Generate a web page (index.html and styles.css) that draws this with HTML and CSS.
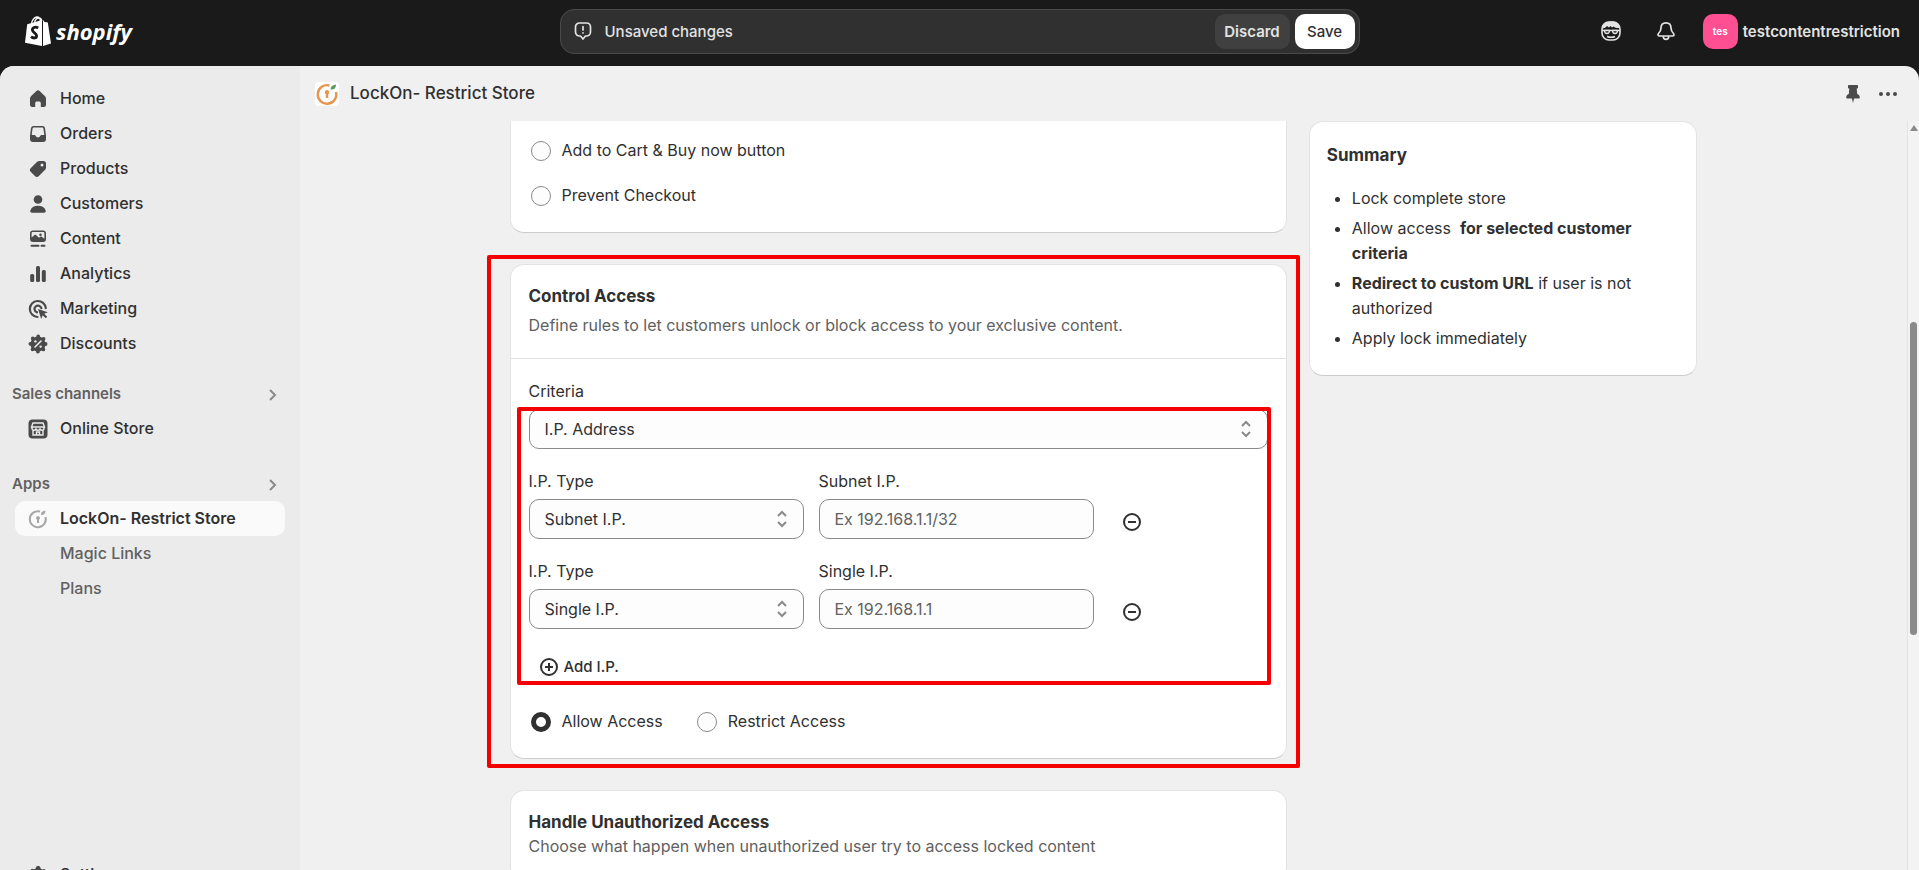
FILE: index.html
```html
<!DOCTYPE html>
<html lang="en">
<head>
    <meta charset="UTF-8">
    <meta name="viewport" content="width=device-width, initial-scale=1.0">
    <title>LockOn- Restrict Store</title>
    <link rel="stylesheet" href="styles.css">
</head>
<body>
    <header class="topbar">
        <a href="#" class="logo" aria-label="Shopify">
            <svg width="26" height="30" viewBox="0 0 26 30">
                <path d="M2.2 8.2L17 4v26L0 26.8z" fill="#fff"/>
                <path d="M18 4l1.600 2 2.400.3c.6 0 .8.3.9.8L26 27.500 18 30z" fill="#fff"/>
                <path d="M6.500 8C7 4 9.500 1 12 1s3.500 2 3.500 5M9.500 7C10 4 12 2 14 2c1.500 0 2.500 1 2.800 3" fill="none" stroke="#fff" stroke-width="1.300"/>
                <path d="M13.200 12c-3-1.800-6-.3-5.800 2.200.2 2.500 4.200 2.800 4.200 5.500 0 2.600-3.200 3-5.600 1" fill="none" stroke="#1a1a1a" stroke-width="2.800"/>
            </svg>
            <span>shopify</span>
        </a>
        <div class="savebar">
            <svg width="20" height="20" viewBox="0 0 20 20" fill="none" stroke="#e3e3e3" stroke-width="1.700" stroke-linecap="round" stroke-linejoin="round">
                <path d="M6.500 2h7a4 4 0 0 1 4 4v5a4 4 0 0 1-4 4h-1L10 18l-2.500-3h-1a4 4 0 0 1-4-4V6a4 4 0 0 1 4-4zM10 5.500v3.500M10 11.800v.1"/>
            </svg>
            <span class="savebar-text">Unsaved changes</span>
            <button type="button" class="btn-discard">Discard</button>
            <button type="button" class="btn-save">Save</button>
        </div>
        <div class="topbar-right">
            <button type="button" class="icon-btn" aria-label="Sidekick">
                <svg width="20" height="20" viewBox="0 0 20 20">
                    <rect x="1" y="1" width="18" height="18" rx="7" fill="none" stroke="#e3e3e3" stroke-width="1.600"/>
                    <path d="M1 7.500C1 3.500 4 .5 8.500.5h3c4 0 7 2.500 7.500 6.500-3 .2-5-.3-6.500-1.500L11 6.500 9.500 5 8 6.500 6 5C5 6.500 3.500 7.500 1 7.500z" fill="#e3e3e3"/>
                    <path d="M1 9.500h18M6 15.500c2.500 1 5.500 1 8 0" fill="none" stroke="#e3e3e3" stroke-width="1.500"/>
                    <path d="M3.500 9.500h5c0 2.200-.8 3-2.500 3s-2.500-.8-2.500-3zM11.500 9.500h5c0 2.200-.8 3-2.500 3s-2.500-.8-2.500-3z" fill="#1a1a1a" stroke="#e3e3e3" stroke-width="1.300"/>
                </svg>
            </button>
            <button type="button" class="icon-btn" aria-label="Notifications">
                <svg width="20" height="20" viewBox="0 0 20 20" fill="none" stroke="#e3e3e3" stroke-width="1.700" stroke-linejoin="round">
                    <path d="M10 1.800c-3.200 0-5 2.300-5 5.200 0 3-1 4-2.500 5.500-1 1-.5 2.500 1 2.500h13c1.500 0 2-1.500 1-2.500C16 11 15 10 15 7c0-2.900-1.800-5.200-5-5.200zM7.300 15.500c0 1.700 1 2.900 2.700 2.900s2.700-1.200 2.700-2.900"/>
                </svg>
            </button>
            <button type="button" class="account">
                <span class="avatar">tes</span>
                <span>testcontentrestriction</span>
            </button>
        </div>
    </header>

    <div class="frame">
        <nav class="sidebar">
            <a href="#" class="nav-item">
                <svg viewBox="0 0 20 20"><path d="M8.400 2.100a2.300 2.300 0 0 1 3.200 0l5.200 5c.8.800 1.200 1.700 1.200 2.700v5.700a2.500 2.500 0 0 1-2.500 2.500h-2.700V14c0-1-.8-1.600-1.600-1.600h-2.400c-.8 0-1.600.6-1.600 1.600v4H4.500A2.500 2.500 0 0 1 2 15.500V9.800c0-1 .4-1.900 1.200-2.700z"/></svg>
                Home
            </a>
            <a href="#" class="nav-item">
                <svg viewBox="0 0 20 20"><path fill-rule="evenodd" d="M5.500 2h9A2.500 2.500 0 0 1 17 4.200l1 7.300v3.500a3 3 0 0 1-3 3H5a3 3 0 0 1-3-3v-3.500l1-7.300A2.500 2.500 0 0 1 5.500 2zm.2 1.600c-.6 0-1 .4-1.100 1L3.700 11h2.500c.8 0 1.300.5 1.600 1.100.4.800 1 1.400 2.200 1.400s1.800-.6 2.200-1.400c.3-.6.8-1.100 1.600-1.100h2.500l-.9-6.400c-.1-.6-.5-1-1.100-1z"/></svg>
                Orders
            </a>
            <a href="#" class="nav-item">
                <svg viewBox="0 0 20 20"><path fill-rule="evenodd" d="M11.500 2h3.700A2.800 2.800 0 0 1 18 4.800v3.700c0 1-.4 1.900-1.100 2.600l-6 6a2.800 2.800 0 0 1-4 0l-4-4a2.800 2.800 0 0 1 0-4l6-6A3.700 3.700 0 0 1 11.500 2zM14 7.500a1.500 1.500 0 1 0 0-3 1.500 1.500 0 0 0 0 3z"/></svg>
                Products
            </a>
            <a href="#" class="nav-item">
                <svg viewBox="0 0 20 20"><circle cx="10" cy="5.500" r="4.300"/><path d="M2.300 16.500C3.500 13.200 6.500 11.800 10 11.800s6.500 1.400 7.700 4.700c.4 1.200-.4 2.300-1.700 2.300H4c-1.300 0-2.100-1.100-1.700-2.300z"/></svg>
                Customers
            </a>
            <a href="#" class="nav-item">
                <svg viewBox="0 0 20 20"><path fill-rule="evenodd" d="M5 1.500h10a3 3 0 0 1 3 3V10a3 3 0 0 1-3 3H5a3 3 0 0 1-3-3V4.500a3 3 0 0 1 3-3zm-1.400 7L6.500 6c.5-.4 1-.4 1.500 0l3 2.700 1.200-1c.5-.4 1-.4 1.500 0l2.700 2V4.500c0-.8-.5-1.400-1.400-1.400H5c-.9 0-1.400.6-1.400 1.400zM12.500 7a1.300 1.300 0 1 0 0-2.600 1.300 1.300 0 0 0 0 2.600z"/><path d="M3.500 16.800h7M13.500 16.800h3" stroke="#4a4a4a" stroke-width="2" stroke-linecap="round"/></svg>
                Content
            </a>
            <a href="#" class="nav-item">
                <svg viewBox="0 0 20 20"><rect x="2.200" y="10" width="4" height="8" rx="1.500"/><rect x="8" y="2" width="4" height="16" rx="1.500"/><rect x="13.800" y="6" width="4" height="12" rx="1.500"/></svg>
                Analytics
            </a>
            <a href="#" class="nav-item">
                <svg viewBox="0 0 20 20"><path d="M17.800 9.200A8 8 0 1 0 9.500 18M13.400 9.200A3.500 3.500 0 1 0 9 13.400" fill="none" stroke="#4a4a4a" stroke-width="2.200" stroke-linecap="round"/><path d="M10 10l9.800 3.300-3.600 1.500 3 3-1.500 1.500-3-3L13.200 20z"/></svg>
                Marketing
            </a>
            <a href="#" class="nav-item">
                <svg viewBox="0 0 20 20"><circle cx="10" cy="10" r="7.600"/><circle cx="10" cy="10" r="7.600" fill="none" stroke="#4a4a4a" stroke-width="3.800" stroke-linecap="round" stroke-dasharray="0 5.970"/><path d="M7 13l6-6" stroke="#ebebeb" stroke-width="1.600" stroke-linecap="round"/><circle cx="7.400" cy="7.400" r="1.200" fill="#ebebeb"/><circle cx="12.600" cy="12.600" r="1.200" fill="#ebebeb"/></svg>
                Discounts
            </a>

            <a href="#" class="nav-heading">
                Sales channels
                <svg viewBox="0 0 20 20"><path d="M8 6l5 5-5 5"/></svg>
            </a>
            <a href="#" class="nav-item">
                <svg viewBox="0 0 20 20"><rect x="0.500" y="0.500" width="19" height="19" rx="4"/><path d="M5 4h10l1.500 4H3.500zM4 8v1.200a1.700 1.700 0 0 0 4 0 2 2 0 0 0 4 0 1.800 1.800 0 0 0 4 0V8M5 11v5h10v-5M8.500 16v-3h3v3" fill="none" stroke="#ebebeb" stroke-width="1.400"/></svg>
                Online Store
            </a>

            <a href="#" class="nav-heading">
                Apps
                <svg viewBox="0 0 20 20"><path d="M8 6l5 5-5 5"/></svg>
            </a>
            <a href="#" class="nav-item active">
                <svg viewBox="0 0 20 20"><path d="M12 2.500A8 8 0 1 0 17.500 8" fill="none" stroke="#a6a6a6" stroke-width="2"/><path d="M10 7a2 2 0 0 1 1 3.700V14H9v-3.300A2 2 0 0 1 10 7zM13 5c0-2 1.500-3 4.500-3.500C17.500 4.500 16 6 13 6z" fill="#a6a6a6"/></svg>
                LockOn- Restrict Store
            </a>
            <a href="#" class="nav-item sub">Magic Links</a>
            <a href="#" class="nav-item sub">Plans</a>

            <a href="#" class="nav-item settings">
                <svg viewBox="0 0 20 20"><circle cx="10" cy="10" r="5" fill="none" stroke="#4a4a4a" stroke-width="4"/><circle cx="10" cy="10" r="7" fill="none" stroke="#4a4a4a" stroke-width="4" stroke-linecap="round" stroke-dasharray="1 6.330" stroke-dashoffset="0.500" transform="rotate(-90 10 10)"/></svg>
                Settings
            </a>
        </nav>

        <main class="main">
            <div class="app-header">
                <svg width="24" height="24" viewBox="0 0 24 24">
                    <rect width="24" height="24" rx="4" fill="#fff"/>
                    <path d="M14.500 3.500A9.300 9.300 0 1 0 21 10" fill="none" stroke="#e8954f" stroke-width="2.400"/>
                    <path d="M12 8a2.300 2.300 0 0 1 1.200 4.200V16h-2.400v-3.800A2.300 2.300 0 0 1 12 8z" fill="#e8954f"/>
                    <path d="M15.500 7.500c0-3 2-4.500 5.500-5 0 3.500-1.500 5.500-5.500 5z" fill="#5d9b62"/>
                </svg>
                <h1>LockOn- Restrict Store</h1>
                <button type="button" class="icon-btn" aria-label="Pin">
                    <svg width="20" height="20" viewBox="0 0 20 20" fill="#4a4a4a"><path d="M6 1h8c.6 0 1 .4 1 1v1.500c0 .6-.5 1-1 1h-.3l.5 5.500c1.500.6 2.600 1.700 2.600 3.300 0 .8-.4 1.200-1.200 1.200h-4.500L10 19l-1.100-4.500H4.400c-.8 0-1.200-.4-1.200-1.200 0-1.600 1.100-2.700 2.600-3.300l.5-5.500H6c-.5 0-1-.4-1-1V2c0-.6.4-1 1-1z"/></svg>
                </button>
                <button type="button" class="icon-btn" aria-label="More actions">
                    <svg width="20" height="20" viewBox="0 0 20 20" fill="#4a4a4a"><circle cx="3" cy="10" r="2"/><circle cx="10" cy="10" r="2"/><circle cx="17" cy="10" r="2"/></svg>
                </button>
            </div>

            <div class="scroll-area">
                <div class="content">
                    <div class="page">
                        <div class="column">
                            <section class="card card-cut">
                                <label class="choice"><input type="radio" name="lock"> Add to Cart &amp; Buy now button</label>
                                <label class="choice"><input type="radio" name="lock"> Prevent Checkout</label>
                            </section>

                            <section class="card">
                                <div class="card-header">
                                    <h2>Control Access</h2>
                                    <p>Define rules to let customers unlock or block access to your exclusive content.</p>
                                </div>
                                <div class="card-body">
                                    <label for="criteria" class="label">Criteria</label>
                                    <div class="rules">
                                        <div class="select">
                                            <select id="criteria"><option>I.P. Address</option></select>
                                            <svg viewBox="0 0 20 20"><path d="M6 7l4-4 4 4M6 13l4 4 4-4"/></svg>
                                        </div>
                                        <div class="rule">
                                            <div>
                                                <label for="type1" class="label">I.P. Type</label>
                                                <div class="select">
                                                    <select id="type1"><option>Subnet I.P.</option></select>
                                                    <svg viewBox="0 0 20 20"><path d="M6 7l4-4 4 4M6 13l4 4 4-4"/></svg>
                                                </div>
                                            </div>
                                            <div>
                                                <label for="ip1" class="label">Subnet I.P.</label>
                                                <input type="text" id="ip1" placeholder="Ex 192.168.1.1/32">
                                            </div>
                                            <button type="button" class="remove" aria-label="Remove">
                                                <svg width="20" height="20" viewBox="0 0 20 20"><circle cx="10" cy="10" r="8"/><path d="M6 10h8"/></svg>
                                            </button>
                                        </div>
                                        <div class="rule">
                                            <div>
                                                <label for="type2" class="label">I.P. Type</label>
                                                <div class="select">
                                                    <select id="type2"><option>Single I.P.</option></select>
                                                    <svg viewBox="0 0 20 20"><path d="M6 7l4-4 4 4M6 13l4 4 4-4"/></svg>
                                                </div>
                                            </div>
                                            <div>
                                                <label for="ip2" class="label">Single I.P.</label>
                                                <input type="text" id="ip2" placeholder="Ex 192.168.1.1">
                                            </div>
                                            <button type="button" class="remove" aria-label="Remove">
                                                <svg width="20" height="20" viewBox="0 0 20 20"><circle cx="10" cy="10" r="8"/><path d="M6 10h8"/></svg>
                                            </button>
                                        </div>
                                        <button type="button" class="add">
                                            <svg width="20" height="20" viewBox="0 0 20 20"><circle cx="10" cy="10" r="8"/><path d="M6 10h8M10 6v8"/></svg>
                                            Add I.P.
                                        </button>
                                        <div class="highlight highlight-rules"></div>
                                    </div>
                                    <div class="access">
                                        <label class="choice"><input type="radio" name="access" checked> Allow Access</label>
                                        <label class="choice"><input type="radio" name="access"> Restrict Access</label>
                                    </div>
                                </div>
                                <div class="highlight highlight-card"></div>
                            </section>

                            <section class="card">
                                <div class="card-header tight">
                                    <h2>Handle Unauthorized Access</h2>
                                    <p>Choose what happen when unauthorized user try to access locked content</p>
                                </div>
                            </section>
                        </div>

                        <aside class="card summary">
                            <h2>Summary</h2>
                            <ul>
                                <li>Lock complete store</li>
                                <li>Allow access &nbsp;<b>for selected customer criteria</b></li>
                                <li><b>Redirect to custom URL</b> if user is not authorized</li>
                                <li>Apply lock immediately</li>
                            </ul>
                        </aside>
                    </div>
                </div>
                <div class="scrollbar">
                    <svg width="8" height="6" viewBox="0 0 8 6"><path d="M4 0l4 6H0z" fill="#8a8a8a"/></svg>
                    <div class="thumb"></div>
                </div>
            </div>
        </main>
    </div>
</body>
</html>
```
FILE: styles.css
```css
* {
    box-sizing: border-box;
}
body {
    margin: 0;
    height: 100vh;
    display: flex;
    flex-direction: column;
    overflow: hidden;
    background: #1a1a1a;
    color: #303030;
    font-family: Inter, "Liberation Sans", sans-serif;
    font-size: 16px;
    line-height: 25px;
}
h1, h2, p, ul {
    margin: 0;
}
a {
    color: inherit;
    text-decoration: none;
}
button, input, select {
    font: inherit;
    color: inherit;
}
button {
    border: none;
    background: none;
    padding: 0;
    cursor: pointer;
}
svg {
    display: block;
    flex-shrink: 0;
}

/* top bar */
.topbar {
    flex: 0 0 66px;
    display: grid;
    grid-template-columns: 1fr 800px 1fr;
    align-items: center;
    padding: 0 19px 4px;
    color: #e3e3e3;
}
.logo {
    display: flex;
    align-items: center;
    gap: 5px;
    padding-left: 6px;
    color: #fff;
    font-family: "Open Sans", sans-serif;
    font-size: 22px;
    font-weight: 700;
    font-style: italic;
}
.savebar {
    display: flex;
    align-items: center;
    height: 45px;
    padding: 0 4px 0 12px;
    background: #303030;
    border: 1px solid #4a4a4a;
    border-radius: 14px;
    font-size: 15px;
    font-weight: 500;
}
.savebar-text {
    flex: 1;
    margin-left: 12px;
}
.btn-discard, .btn-save {
    height: 35px;
    border-radius: 10px;
    font-weight: 600;
}
.btn-discard {
    width: 75px;
    margin-right: 5px;
    background: #404040;
    color: #e3e3e3;
}
.btn-save {
    width: 60px;
    background: #fff;
    color: #303030;
    font-weight: 500;
}
.topbar-right {
    display: flex;
    justify-content: flex-end;
    align-items: center;
}
.topbar-right .icon-btn {
    margin-right: 35px;
}
.topbar-right .icon-btn + .icon-btn {
    margin-right: 27px;
}
.account {
    display: flex;
    align-items: center;
    gap: 5px;
    font-size: 15px;
    font-weight: 600;
}
.avatar {
    width: 35px;
    height: 35px;
    border-radius: 10px;
    background: #ff4f93;
    color: #fff;
    font-size: 10px;
    line-height: 35px;
}

/* frame */
.frame {
    flex: 1;
    min-height: 0;
    display: flex;
    background: #f0f0f0;
    border-radius: 14px 14px 0 0;
    overflow: hidden;
}
.sidebar {
    flex: 0 0 300px;
    display: flex;
    flex-direction: column;
    padding: 15px 15px 0;
    background: #ebebeb;
    font-weight: 500;
}
.nav-item {
    flex-shrink: 0;
    display: flex;
    align-items: center;
    gap: 12px;
    height: 35px;
    padding: 0 13px;
    border-radius: 10px;
}
.nav-item svg {
    width: 20px;
    height: 20px;
    fill: #4a4a4a;
}
.nav-item.active {
    background: #fafafa;
    font-weight: 600;
}
.nav-item.sub {
    padding-left: 45px;
    color: #616161;
}
.nav-item.settings {
    margin-top: auto;
    margin-bottom: -22px;
}
.nav-heading {
    display: flex;
    justify-content: space-between;
    align-items: center;
    height: 25px;
    margin: 20px 0 5px -3px;
    padding-right: 3px;
    color: #616161;
    font-size: 15px;
    font-weight: 600;
}
.nav-item + .nav-heading ~ .nav-heading {
    margin-top: 25px;
}
.nav-heading svg {
    width: 20px;
    height: 20px;
    fill: none;
    stroke: #8a8a8a;
    stroke-width: 2;
}

/* main area */
.main {
    flex: 1;
    min-width: 0;
    display: flex;
    flex-direction: column;
}
.app-header {
    flex: 0 0 55px;
    display: flex;
    align-items: center;
    gap: 11px;
    padding: 0 21px 0 15px;
}
.app-header h1 {
    flex: 1;
    font-size: 17px;
    font-weight: 500;
}
.app-header .icon-btn + .icon-btn {
    margin-left: 4px;
}
.scroll-area {
    flex: 1;
    min-height: 0;
    display: flex;
}
.content {
    flex: 1;
    overflow: hidden;
}
.page {
    display: grid;
    grid-template-columns: 2fr 1fr;
    gap: 22px;
    align-items: start;
    max-width: 1188px;
    margin: 0 auto;
}
.column {
    display: flex;
    flex-direction: column;
    gap: 31px;
}
.card {
    position: relative;
    background: #fff;
    border: 1px solid #e3e3e3;
    border-bottom-color: #ccc;
    border-radius: 14px;
}
.card-cut {
    border-top: none;
    border-radius: 0 0 14px 14px;
    padding: 17px 20px 24px;
}
.card-cut .choice + .choice {
    margin-top: 20px;
}
.card h2 {
    font-size: 17px;
    font-weight: 650;
    line-height: 24px;
}
.card-header {
    padding: 19px 18px 20px;
    border-bottom: 1px solid #e3e3e3;
}
.card-header p {
    margin-top: 5px;
    color: #616161;
}
.card-header.tight p {
    margin-top: 0;
}
.card-body {
    padding: 20px 18px 24px;
}
.label {
    display: block;
    margin-bottom: 5px;
}
.choice {
    display: flex;
    align-items: center;
    gap: 11px;
}
.choice input {
    appearance: none;
    width: 20px;
    height: 20px;
    margin: 0;
    border: 1px solid #8a8a8a;
    border-radius: 50%;
    background: #fdfdfd;
}
.choice input:checked {
    border: 5px solid #303030;
    background: #fff;
}
.rules {
    position: relative;
}
.select {
    display: grid;
    align-items: center;
}
.select select, .select svg {
    grid-area: 1 / 1;
}
.select svg {
    justify-self: end;
    width: 20px;
    height: 20px;
    margin-right: 12px;
    fill: none;
    stroke: #8a8a8a;
    stroke-width: 2;
    pointer-events: none;
}
select, input[type="text"] {
    appearance: none;
    width: 100%;
    height: 40px;
    padding: 0 15px;
    border: 1px solid #8a8a8a;
    border-radius: 10px;
    background: #fdfdfd;
}
input::placeholder {
    color: #616161;
}
.rule {
    display: grid;
    grid-template-columns: 275px 275px auto;
    justify-content: start;
    align-items: end;
    column-gap: 15px;
    margin-top: 20px;
}
.remove {
    margin: 0 0 7px 13px;
}
.remove svg, .add svg {
    fill: none;
    stroke: #303030;
    stroke-width: 2;
}
.add {
    display: flex;
    align-items: center;
    gap: 5px;
    margin: 25px 0 0 10px;
    font-size: 15px;
    font-weight: 500;
}
.access {
    display: flex;
    gap: 34px;
    margin: 30px 0 0 2px;
}
.summary {
    padding: 21px 17px 24px;
}
.summary ul {
    margin-top: 19px;
    padding-left: 25px;
}
.summary li + li {
    margin-top: 5px;
}
.summary b {
    font-weight: 700;
}

/* red marks over the form */
.highlight {
    position: absolute;
    border: 4px solid #f40000;
    border-radius: 2px;
    pointer-events: none;
}
.highlight-card {
    inset: -10px -14px -10px -24px;
}
.highlight-rules {
    inset: -2px -3px -6px -12px;
}

.scrollbar {
    flex: 0 0 12px;
    display: flex;
    flex-direction: column;
    align-items: center;
    padding-top: 4px;
    background: #f3f3f3;
    border-left: 1px solid #e3e3e3;
}
.thumb {
    width: 7px;
    height: 42%;
    margin-top: 22vh;
    flex-shrink: 0;
    background: #8a8a8a;
    border-radius: 4px;
}
```
